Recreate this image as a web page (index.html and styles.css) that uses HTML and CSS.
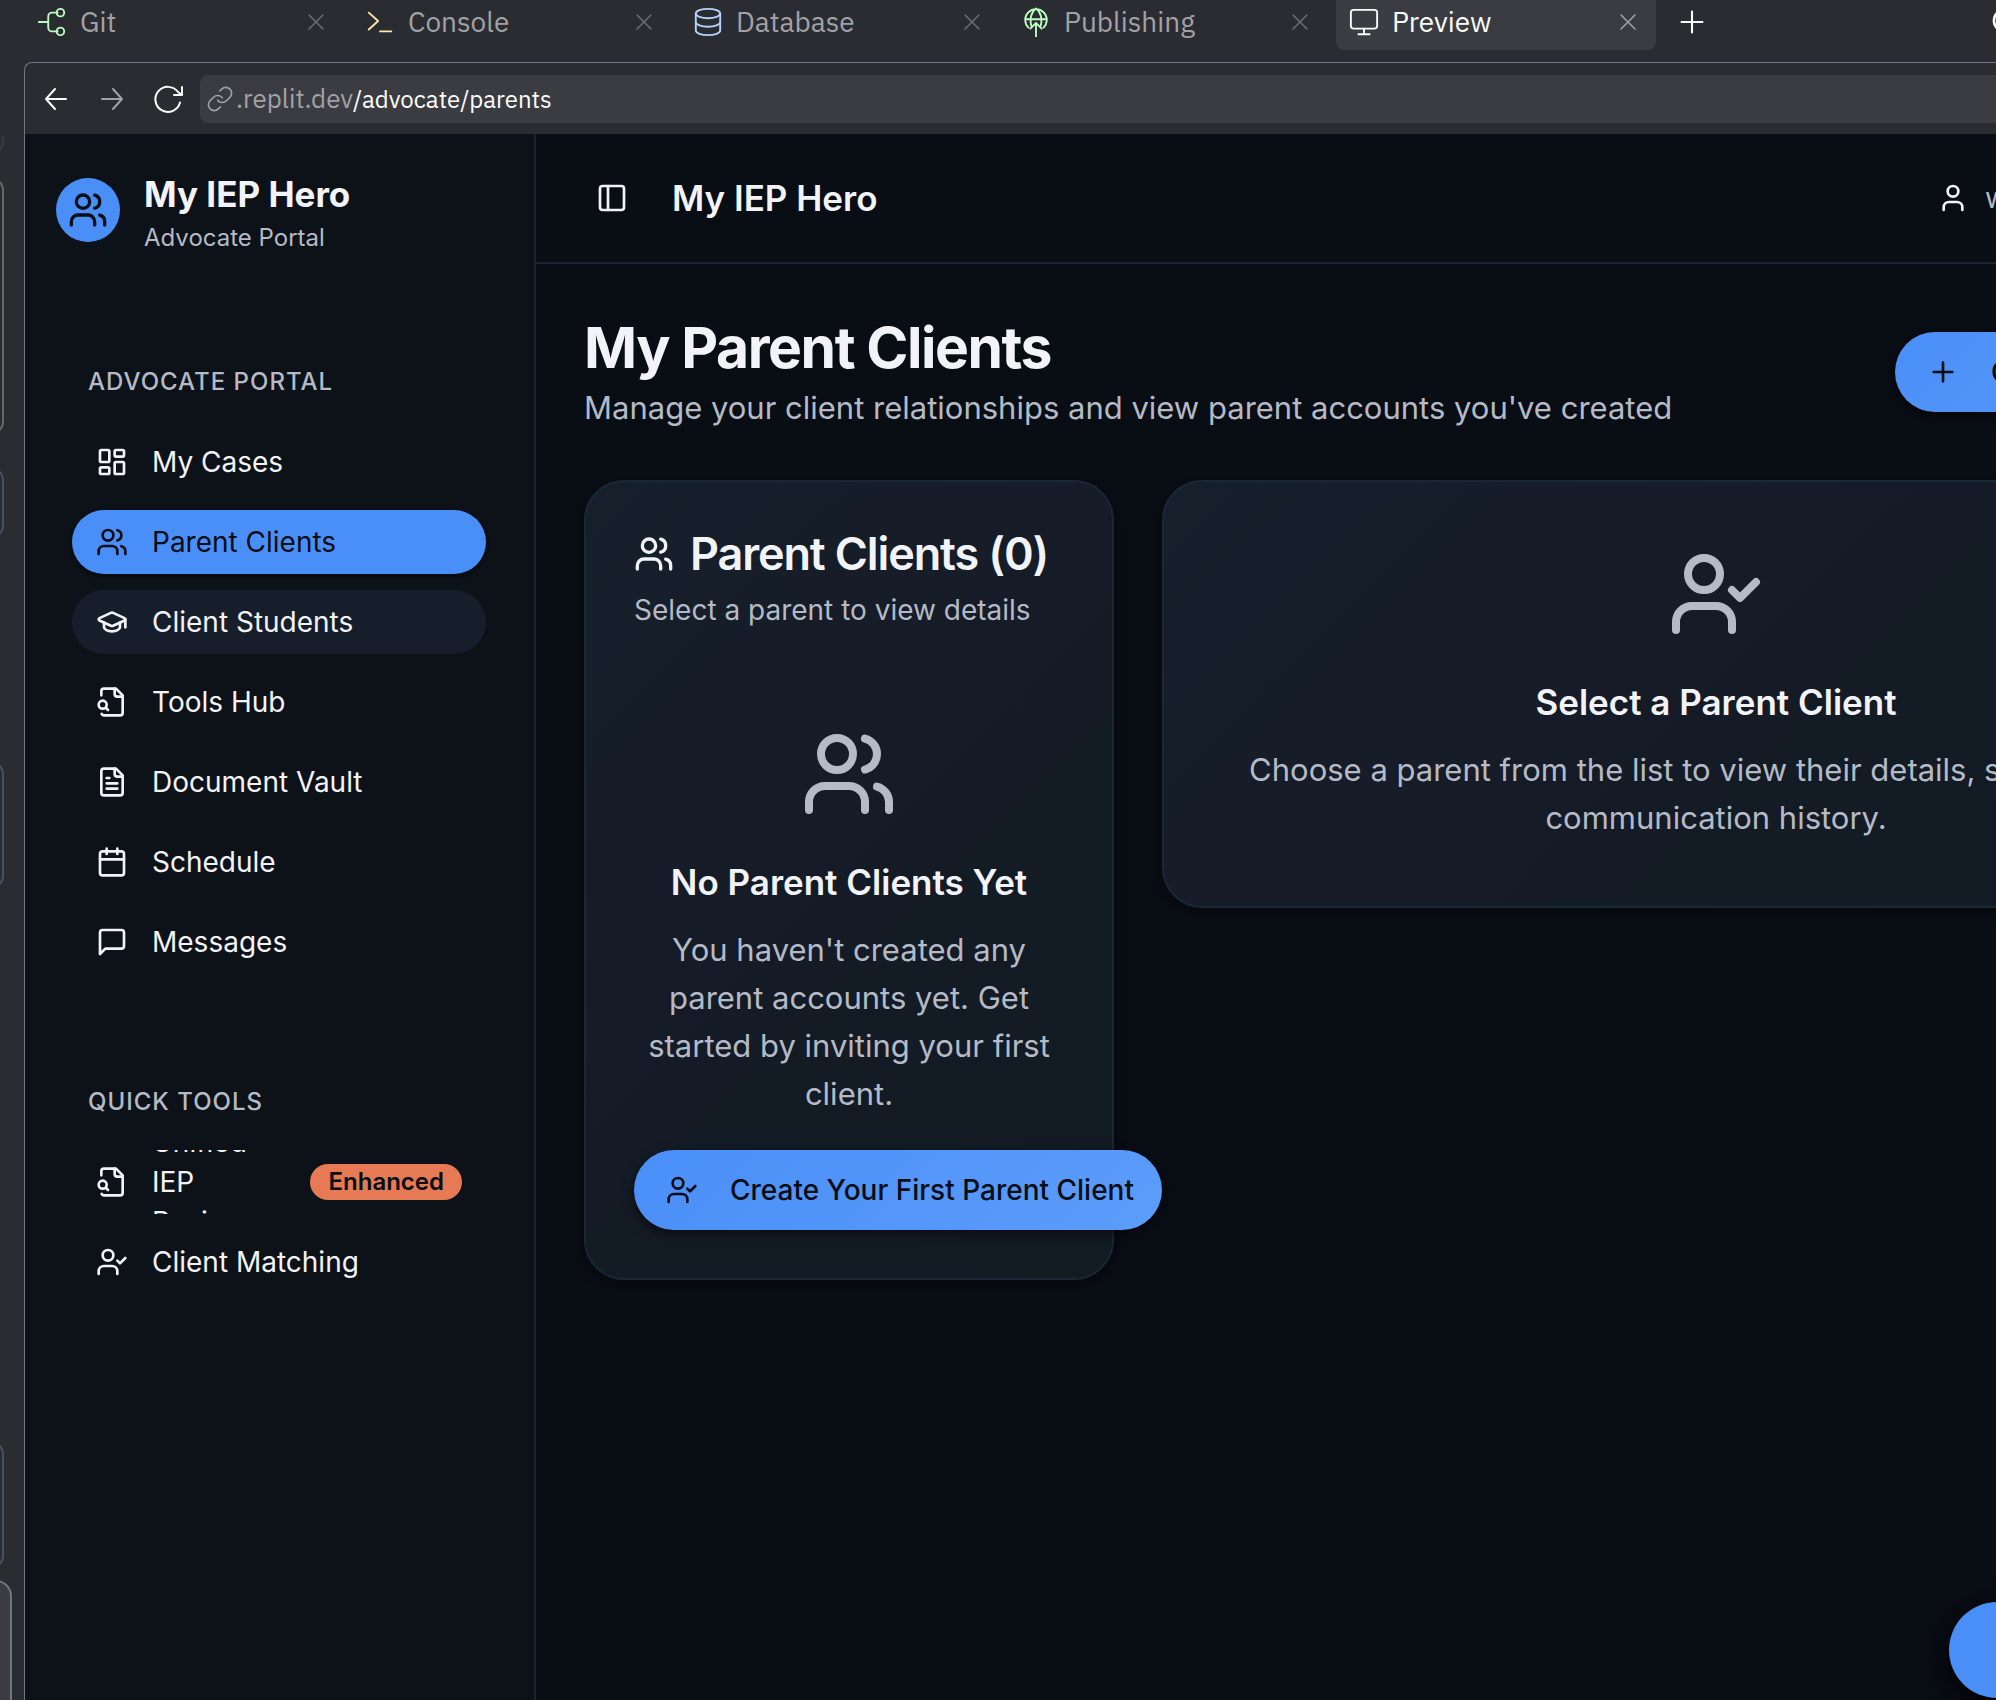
FILE: index.html
```html
<!DOCTYPE html>
<html lang="en">
<head>
<meta charset="utf-8">
<title>My IEP Hero</title>
<link rel="stylesheet" href="styles.css">
</head>
<body>
<svg class="sprite" aria-hidden="true">
  <symbol id="users" viewBox="0 0 24 24"><path d="M16 21v-2a4 4 0 0 0-4-4H6a4 4 0 0 0-4 4v2"/><circle cx="9" cy="7" r="4"/><path d="M22 21v-2a4 4 0 0 0-3-3.87"/><path d="M16 3.13a4 4 0 0 1 0 7.75"/></symbol>
  <symbol id="user-check" viewBox="0 0 24 24"><path d="M16 21v-2a4 4 0 0 0-4-4H6a4 4 0 0 0-4 4v2"/><circle cx="9" cy="7" r="4"/><path d="m16 11 2 2 4-4"/></symbol>
  <symbol id="file-search" viewBox="0 0 24 24"><path d="M14 2v4a2 2 0 0 0 2 2h4"/><path d="M4.268 21a2 2 0 0 0 1.727 1H18a2 2 0 0 0 2-2V7l-5-5H6a2 2 0 0 0-2 2v3"/><path d="m9 18-1.500-1.500"/><circle cx="5" cy="14" r="3"/></symbol>
  <symbol id="close" viewBox="0 0 24 24"><path d="M5 5l14 14M19 5 5 19"/></symbol>
  <symbol id="plus" viewBox="0 0 24 24"><path d="M5 12h14M12 5v14"/></symbol>
</svg>
<div class="window">
  <header class="tabs">
    <div class="tab"><svg class="icon tab-icon git" viewBox="0 0 32 32"><path d="M2 16h10M22 6h-6a4 4 0 0 0-4 4v12a4 4 0 0 0 4 4h6"/><circle cx="25" cy="6" r="4"/><circle cx="25" cy="26" r="4"/></svg><a href="#git">Git</a><button class="close" aria-label="Close Git"><svg class="icon"><use href="#close"/></svg></button></div>
    <div class="tab"><svg class="icon tab-icon console" viewBox="0 0 32 32"><path d="m4 6 10 9-10 9M16 26h12"/></svg><a href="#console">Console</a><button class="close" aria-label="Close Console"><svg class="icon"><use href="#close"/></svg></button></div>
    <div class="tab"><svg class="icon tab-icon database" viewBox="0 0 32 32"><ellipse cx="16" cy="7" rx="13" ry="5"/><path d="M3 7v18c0 2.800 5.800 5 13 5s13-2.200 13-5V7M3 16c0 2.800 5.800 5 13 5s13-2.200 13-5"/></svg><a href="#database">Database</a><button class="close" aria-label="Close Database"><svg class="icon"><use href="#close"/></svg></button></div>
    <div class="tab"><svg class="icon tab-icon publish" viewBox="0 0 32 32"><path d="M8 22a11.500 11.500 0 1 1 16 0M4.500 13h23M11 20c-2-7 0-15 5-18.500C21 5 23 13 21 20M16 32V18M10 23l6-6 6 6"/></svg><a href="#publishing">Publishing</a><button class="close" aria-label="Close Publishing"><svg class="icon"><use href="#close"/></svg></button></div>
    <div class="tab tab-active"><svg class="icon tab-icon" viewBox="0 0 32 32"><rect x="2" y="3" width="28" height="20" rx="3"/><path d="M16 23v6M10 29h12"/></svg><a href="#preview">Preview</a><button class="close" aria-label="Close Preview"><svg class="icon"><use href="#close"/></svg></button></div>
    <button class="new-tab" aria-label="New tab"><svg class="icon"><use href="#plus"/></svg></button>
    <button class="search" aria-label="Search"><svg class="icon" viewBox="0 0 24 24"><circle cx="11" cy="11" r="8"/><path d="m21 21-4-4"/></svg></button>
  </header>
  <div class="workspace">
    <aside class="gutter">
      <div class="peek peek-a"></div>
      <div class="peek peek-b"></div>
      <div class="peek peek-c"></div>
      <div class="peek peek-d"></div>
      <div class="peek peek-e"></div>
      <div class="peek peek-f"></div>
    </aside>
    <div class="pane">
      <div class="toolbar">
        <button aria-label="Back"><svg class="icon" viewBox="0 0 32 32"><path d="M26 16H6M15 6 6 16l9 10"/></svg></button>
        <button class="dim" aria-label="Forward"><svg class="icon" viewBox="0 0 32 32"><path d="M6 16h20M17 6l9 10-9 10"/></svg></button>
        <button aria-label="Reload"><svg class="icon" viewBox="0 0 32 32"><path d="M28 19.500A12.500 12.500 0 1 1 26 9l4 3M30 4v8h-8"/></svg></button>
        <button class="address"><svg class="icon" viewBox="0 0 24 24"><path d="M10 13a5 5 0 0 0 7.540.540l3-3a5 5 0 0 0-7.070-7.070l-1.720 1.710"/><path d="M14 11a5 5 0 0 0-7.540-.540l-3 3a5 5 0 0 0 7.070 7.070l1.710-1.710"/></svg><span><span class="host">.replit.dev</span><span class="path">/advocate/parents</span></span></button>
      </div>
      <div class="app">
        <nav class="sidebar">
          <div class="brand">
            <div class="logo"><svg class="icon"><use href="#users"/></svg></div>
            <div><div class="brand-name">My IEP Hero</div><div class="brand-sub">Advocate Portal</div></div>
          </div>
          <section class="group">
            <h2>ADVOCATE PORTAL</h2>
            <a class="item" href="#cases"><svg class="icon" viewBox="0 0 24 24"><rect x="3" y="3" width="7" height="9" rx="1"/><rect x="14" y="3" width="7" height="5" rx="1"/><rect x="14" y="12" width="7" height="9" rx="1"/><rect x="3" y="16" width="7" height="5" rx="1"/></svg><span>My Cases</span></a>
            <a class="item item-active" href="#parents"><svg class="icon"><use href="#users"/></svg><span>Parent Clients</span></a>
            <a class="item item-hover" href="#students"><svg class="icon" viewBox="0 0 24 24"><path d="M21.420 10.922a1 1 0 0 0-.019-1.838L12.830 5.180a2 2 0 0 0-1.660 0L2.600 9.080a1 1 0 0 0 0 1.832l8.570 3.908a2 2 0 0 0 1.660 0z"/><path d="M22 10v6"/><path d="M6 12.500V16a6 3 0 0 0 12 0v-3.500"/></svg><span>Client Students</span></a>
            <a class="item" href="#tools"><svg class="icon"><use href="#file-search"/></svg><span>Tools Hub</span></a>
            <a class="item" href="#vault"><svg class="icon" viewBox="0 0 24 24"><path d="M15 2H6a2 2 0 0 0-2 2v16a2 2 0 0 0 2 2h12a2 2 0 0 0 2-2V7Z"/><path d="M14 2v4a2 2 0 0 0 2 2h4M10 9H8M16 13H8M16 17H8"/></svg><span>Document Vault</span></a>
            <a class="item" href="#schedule"><svg class="icon" viewBox="0 0 24 24"><path d="M8 2v4M16 2v4M3 10h18"/><rect x="3" y="4" width="18" height="18" rx="2"/></svg><span>Schedule</span></a>
            <a class="item" href="#messages"><svg class="icon" viewBox="0 0 24 24"><path d="M21 15a2 2 0 0 1-2 2H7l-4 4V5a2 2 0 0 1 2-2h14a2 2 0 0 1 2 2z"/></svg><span>Messages</span></a>
          </section>
          <section class="group">
            <h2>QUICK TOOLS</h2>
            <a class="item" href="#review"><svg class="icon"><use href="#file-search"/></svg><span class="narrow">Unified IEP Review</span><span class="badge">Enhanced</span></a>
            <a class="item" href="#matching"><svg class="icon"><use href="#user-check"/></svg><span>Client Matching</span></a>
          </section>
        </nav>
        <main class="main">
          <header class="topbar">
            <button class="toggle" aria-label="Toggle sidebar"><svg class="icon" viewBox="0 0 24 24"><rect x="3" y="3" width="18" height="18" rx="2"/><path d="M9 3v18"/></svg></button>
            <div class="app-name">My IEP Hero</div>
            <div class="account"><svg class="icon" viewBox="0 0 24 24"><path d="M19 21v-2a4 4 0 0 0-4-4H9a4 4 0 0 0-4 4v2"/><circle cx="12" cy="7" r="4"/></svg><span>w</span></div>
          </header>
          <div class="page">
            <div class="page-head">
              <div>
                <h1>My Parent Clients</h1>
                <p class="lead">Manage your client relationships and view parent accounts you've created</p>
              </div>
              <button class="primary create"><svg class="icon"><use href="#plus"/></svg>Create New Parent</button>
            </div>
            <div class="cards">
              <section class="card">
                <h2 class="card-title"><svg class="icon"><use href="#users"/></svg>Parent Clients (0)</h2>
                <p class="card-sub">Select a parent to view details</p>
                <div class="empty">
                  <svg class="icon"><use href="#users"/></svg>
                  <h3>No Parent Clients Yet</h3>
                  <p>You haven't created any parent accounts yet. Get started by inviting your first client.</p>
                  <button class="primary"><svg class="icon"><use href="#user-check"/></svg>Create Your First Parent Client</button>
                </div>
              </section>
              <section class="card card-detail">
                <div class="empty">
                  <svg class="icon"><use href="#user-check"/></svg>
                  <h3>Select a Parent Client</h3>
                  <p>Choose a parent from the list to view their details, students, and communication history.</p>
                </div>
              </section>
            </div>
          </div>
        </main>
      </div>
    </div>
  </div>
</div>
<button class="fab" aria-label="Help"></button>
</body>
</html>
```
FILE: styles.css
```css
:root {
  --chrome: #2b2c31;
  --chrome-raised: #3b3c41;
  --line: #1a2433;
  --ink: #090d14;
  --side: #0d1118;
  --text: #f2f3f7;
  --muted: #b4bac6;
  --blue: #4a8ff8;
  /* how far the window runs past the right edge of the view */
  --bleed: 322px;
}
* { box-sizing: border-box; }
body {
  margin: 0;
  overflow: hidden;
  background: var(--chrome);
  color: var(--text);
  font: 400 28px/40px Inter, "Liberation Sans", sans-serif;
}
h1, h2, h3, p { margin: 0; }
a { color: inherit; text-decoration: none; }
button { margin: 0; padding: 0; border: 0; background: none; color: inherit; font: inherit; }
.sprite { display: none; }
.icon {
  flex: none;
  width: 32px;
  height: 32px;
  fill: none;
  stroke: currentColor;
  stroke-width: 2;
  stroke-linecap: round;
  stroke-linejoin: round;
}
.window {
  display: flex;
  flex-direction: column;
  width: calc(100% + var(--bleed));
  min-height: 100vh;
}

/* editor tabs */
.tabs {
  display: flex;
  gap: 8px;
  height: 62px;
  padding: 0 0 12px 24px;
  font-family: "IBM Plex Sans", Roboto, sans-serif;
  color: #a1a2a7;
}
.tab {
  display: flex;
  align-items: center;
  gap: 12px;
  width: 320px;
  padding: 0 16px 6px 12px;
  border-radius: 0 0 8px 8px;
}
.tab-active { background: var(--chrome-raised); color: #fcfcfc; }
.tab-icon { height: 30px; }
.git, .publish { color: #bdfcc0; }
.console { color: #fbe7a2; }
.database { color: #b5d3ff; }
.close { display: flex; margin-left: auto; color: #6c6d72; }
.close .icon { width: 24px; height: 24px; stroke-width: 1.5; }
.tab-active .close { color: #a1a2a7; }
.new-tab, .search { display: flex; align-items: center; padding-bottom: 6px; color: #fcfcfc; }
.new-tab { padding-left: 10px; }
.new-tab .icon { width: 36px; height: 36px; stroke-width: 1.4; }
.search { margin-left: auto; margin-right: calc(var(--bleed) - 26px); }

/* slivers of the neighbouring pane */
.workspace { display: flex; flex: 1; }
.gutter { flex: none; width: 24px; overflow: hidden; }
.peek {
  width: 24px;
  margin-left: -20px;
  border: 2px solid #4a4e63;
  border-radius: 16px;
}
.peek-a { height: 18px; margin-top: 74px; border-top: 0; border-color: #383a48; border-radius: 0 0 16px 16px; }
.peek-b { height: 256px; margin-top: 24px; border-color: #6a6463; }
.peek-c { height: 70px; margin-top: 34px; }
.peek-d { height: 126px; margin-top: 224px; }
.peek-e { height: 126px; margin-top: 554px; }
.peek-f { width: 32px; height: 140px; margin-top: 12px; margin-bottom: -24px; border-color: #6f7688; background: var(--chrome-raised); }

.pane {
  display: flex;
  flex: 1;
  flex-direction: column;
  min-width: 0;
  border: 1px solid #6f7688;
  border-width: 1px 0 0 1px;
  border-radius: 8px 0 0 0;
}
.toolbar {
  display: flex;
  align-items: center;
  gap: 24px;
  height: 71px;
  padding-left: 15px;
  font: 26px/32px "IBM Plex Sans", Roboto, sans-serif;
  color: #fcfcfc;
}
.toolbar .icon { display: block; stroke-width: 2; }
.toolbar .dim { color: #a1a2a7; }
.toolbar .address {
  display: flex;
  flex: 1;
  align-items: center;
  gap: 2px;
  height: 48px;
  margin-left: -8px;
  padding-left: 6px;
  border-radius: 8px;
  background: var(--chrome-raised);
}
.toolbar .address .icon { width: 28px; height: 28px; stroke-width: 1.4; color: #a1a2a7; }
.host { color: #a1a2a7; }
.path { font-size: 24px; }

.app { display: flex; flex: 1; background: var(--ink); }

/* sidebar */
.sidebar {
  flex: none;
  width: 511px;
  border-right: 2px solid var(--line);
  background: var(--side);
}
.brand {
  display: flex;
  align-items: center;
  gap: 24px;
  padding: 32px 31px;
}
.logo {
  display: grid;
  place-items: center;
  width: 64px;
  height: 64px;
  border-radius: 50%;
  background: var(--blue);
  color: var(--ink);
}
.logo .icon { width: 40px; height: 40px; }
.brand-name { font-size: 35px; font-weight: 700; line-height: 56px; }
.brand-sub { font-size: 24px; line-height: 32px; color: var(--muted); }
.group {
  display: flex;
  flex-direction: column;
  gap: 16px;
  padding: 64px 48px 32px 47px;
}
.group h2 {
  padding-left: 16px;
  font-size: 24px;
  font-weight: 500;
  line-height: 64px;
  letter-spacing: 1px;
  color: var(--muted);
}
.item {
  display: flex;
  align-items: center;
  gap: 24px;
  height: 64px;
  padding: 0 24px;
  overflow: hidden;
  border-radius: 32px;
}
.item-active { background: var(--blue); color: var(--ink); box-shadow: 0 2px 4px #0008; }
.item-hover { background: #171e2b; }
.narrow { flex: 1; width: 100px; padding-right: 40px; }
.badge {
  padding: 0 18px;
  border-radius: 18px;
  background: #e57a55;
  color: var(--ink);
  font-size: 24px;
  font-weight: 600;
  line-height: 36px;
}

/* main column */
.main { flex: 1; min-width: 0; }
.topbar {
  display: flex;
  align-items: center;
  gap: 32px;
  height: 130px;
  padding: 0 48px;
  border-bottom: 2px solid var(--line);
}
.toggle { display: grid; place-items: center; width: 56px; height: 56px; }
.app-name { font-size: 35px; font-weight: 600; }
.account {
  display: flex;
  align-items: center;
  gap: 16px;
  width: 333px;
  margin-left: auto;
}
.account span { color: var(--muted); }
.page { padding: 48px; }
.page-head {
  display: flex;
  align-items: center;
  justify-content: space-between;
  margin-bottom: 48px;
}
h1 { font-size: 57px; font-weight: 700; line-height: 72px; letter-spacing: -0.025em; }
.lead { font-size: 31px; line-height: 48px; color: var(--muted); }
.primary {
  display: inline-flex;
  align-items: center;
  gap: 32px;
  height: 80px;
  padding: 0 28px 0 32px;
  border-radius: 40px;
  background: linear-gradient(135deg, var(--blue), #5c9cfa);
  box-shadow: 0 4px 12px #0008;
  color: var(--ink);
  font-weight: 500;
  white-space: nowrap;
}
.create { width: 375px; }
.cards {
  display: grid;
  grid-template-columns: repeat(3, minmax(0, 1fr));
  gap: 48px;
  align-items: start;
}
.card {
  padding: 48px;
  border: 2px solid #1a2734;
  border-radius: 40px;
  background: linear-gradient(135deg, #15202b, #161c28 35%, #131b25 60%, #121a22);
  box-shadow: 0 4px 12px #0006;
}
.card-detail { grid-column: span 2; padding: 16px 48px; }
.card-title {
  display: flex;
  align-items: center;
  gap: 16px;
  font-size: 45px;
  font-weight: 600;
  line-height: 48px;
  letter-spacing: -0.025em;
  white-space: nowrap;
}
.card-title .icon { width: 40px; height: 40px; }
.card-sub { margin-top: 12px; color: var(--muted); }
.card-sub + .empty { padding-top: 96px; }
.empty { padding: 48px 0; text-align: center; }
.card-sub + .empty { padding-bottom: 0; }
.empty > .icon { display: block; width: 96px; height: 96px; margin: 0 auto 32px; color: var(--muted); }
.empty h3 { margin-bottom: 16px; font-size: 35px; font-weight: 600; line-height: 56px; }
.empty p { font-size: 31px; line-height: 48px; color: var(--muted); }
.empty .primary { margin-top: 32px; }

.fab {
  position: fixed;
  right: -49px;
  bottom: 2px;
  width: 96px;
  height: 96px;
  border-radius: 50%;
  background: var(--blue);
  box-shadow: 0 8px 30px #000;
}
```
